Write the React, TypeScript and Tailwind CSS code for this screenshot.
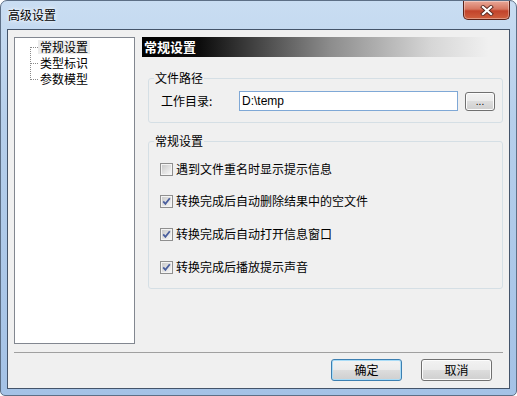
import React from "react";

function TreeConnector({ kind }: { kind: "first" | "mid" | "last" }) {
  const y1 = kind === "first" ? 8 : 0;
  const y2 = kind === "last" ? 9 : 16;
  return (
    <svg width="8" height="16" viewBox="0 0 8 16" shapeRendering="crispEdges" className="shrink-0">
      <line x1="0.5" y1={y1} x2="0.5" y2={y2} stroke="#8a8a8a" strokeWidth="1" strokeDasharray="1 1" />
      <line x1="1" y1="8.5" x2="8" y2="8.5" stroke="#8a8a8a" strokeWidth="1" strokeDasharray="1 1" />
    </svg>
  );
}

function CheckBox({ checked }: { checked: boolean }) {
  return (
    <svg width="13" height="13" viewBox="0 0 13 13" className="shrink-0">
      <defs>
        <linearGradient id={checked ? "cbg1" : "cbg0"} x1="0" y1="0" x2="1" y2="1">
          <stop offset="0" stopColor="#cbcbcb" />
          <stop offset="1" stopColor="#f6f6f6" />
        </linearGradient>
      </defs>
      <rect x="0.5" y="0.5" width="12" height="12" fill="#f4f4f4" stroke="#8f8f8f" />
      <rect x="2" y="2" width="9" height="9" fill={`url(#${checked ? "cbg1" : "cbg0"})`} />
      {checked && (
        <path d="M3.2 6.4 L5.4 8.8 L9.8 3.2" fill="none" stroke="#4a5f9e" strokeWidth="1.8" />
      )}
    </svg>
  );
}

function WinButton({ label, isDefault }: { label: string; isDefault?: boolean }) {
  return (
    <div
      className={
        "w-[71px] h-[22px] rounded-[3px] border flex items-center justify-center text-[12px] text-black bg-[linear-gradient(180deg,#f2f2f2_0%,#ebebeb_50%,#dddddd_50%,#cfcfcf_100%)] " +
        (isDefault
          ? "border-[#3c7fb1] shadow-[inset_0_0_0_1px_#a9dcf7]"
          : "border-[#707070] shadow-[inset_0_0_0_1px_#fcfcfc]")
      }
    >
      {label}
    </div>
  );
}

export default function App() {
  const checks = [
    { label: "遇到文件重名时显示提示信息", checked: false, mt: "" },
    { label: "转换完成后自动删除结果中的空文件", checked: true, mt: "mt-[16px]" },
    { label: "转换完成后自动打开信息窗口", checked: true, mt: "mt-[17px]" },
    { label: "转换完成后播放提示声音", checked: true, mt: "mt-[17px]" },
  ];
  return (
    <div className='relative w-[517px] h-[396px] overflow-hidden rounded-t-[7px] rounded-b-[5px] border border-[#5d6f86] bg-[linear-gradient(180deg,#c9ddf2_0%,#b6cfeb_30%,#a4c2e6_100%)] flex flex-col font-["Noto_Sans_CJK_SC",sans-serif] text-black'>
      {/* title bar */}
      <div className="h-[28px] flex items-center pl-[7px] text-[12px] leading-[16px]">
        <span className="[text-shadow:0_0_6px_#ffffff,0_0_3px_#ffffff]">高级设置</span>
      </div>
      <div className="absolute top-0 right-[6px] w-[47px] h-[19px] rounded-b-[5px] border border-t-0 border-[#5a2219] bg-[linear-gradient(180deg,#e9a898_0%,#d67660_45%,#c2432b_55%,#d0603f_100%)] flex items-center justify-center shadow-[inset_0_0_0_1px_rgba(255,255,255,0.35)]">
        <svg width="14" height="11" viewBox="0 0 14 11">
          <path d="M3 2 L11 9 M11 2 L3 9" stroke="#5a2a22" strokeWidth="4" strokeLinecap="square" />
          <path d="M3 2 L11 9 M11 2 L3 9" stroke="#ffffff" strokeWidth="2.2" strokeLinecap="square" />
        </svg>
      </div>

      {/* client area */}
      <div className="mx-[6px] h-[360px] border border-[#44546a] bg-[#f0f0f0] px-[6px] pt-[7px] flex flex-col text-[12px] leading-[16px]">
        <div className="flex gap-[7px] h-[307px]">
          {/* tree */}
          <div className="w-[121px] h-full border border-[#828790] bg-white pt-[1px]">
            {[
              { t: "常规设置", k: "first" as const, sel: true },
              { t: "类型标识", k: "mid" as const, sel: false },
              { t: "参数模型", k: "last" as const, sel: false },
            ].map((it) => (
              <div key={it.t} className="h-[16px] flex items-center pl-[15px]">
                <TreeConnector kind={it.k} />
                <span className={"px-[2px] h-[14px] leading-[14px] " + (it.sel ? "bg-[#ececec]" : "")}>{it.t}</span>
              </div>
            ))}
          </div>

          {/* right panel */}
          <div className="w-[361px] flex flex-col">
            <div className="h-[20px] pl-[2px] flex items-center bg-[linear-gradient(90deg,#000000_0%,#0c0c0c_16%,#8c8c8c_52%,#d6d6d6_80%,#f0f0f0_96%)] text-white font-bold text-[13px]">
              常规设置
            </div>

            <fieldset className="mt-[13px] ml-[6px] w-[355px] border border-[#d5dfe5] rounded-[3px] pl-[5px] pr-[7px] pb-[11px]">
              <legend className="px-[1px] leading-[16px]">文件路径</legend>
              <div className="pl-[7px] pt-[5px] flex items-center">
                <div className="w-[78px]">工作目录:</div>
                <div className='w-[219px] h-[20px] border border-[#7fa8d6] bg-white flex items-center pl-[2px] font-["Liberation_Sans",sans-serif] text-[12px]'>
                  D:\temp
                </div>
                <div className='ml-[7px] w-[30px] h-[19px] rounded-[3px] border border-[#707070] bg-[linear-gradient(180deg,#f2f2f2_0%,#ebebeb_50%,#dddddd_50%,#cfcfcf_100%)] shadow-[inset_0_0_0_1px_#fcfcfc] flex items-end justify-center pb-[3px] text-[10px] leading-[10px] font-["Liberation_Sans",sans-serif]'>
                  ...
                </div>
              </div>
            </fieldset>

            <fieldset className="mt-[10px] ml-[6px] w-[355px] border border-[#d5dfe5] rounded-[3px] pl-[5px] pr-[7px] pb-[13px]">
              <legend className="px-[1px] leading-[16px]">常规设置</legend>
              <div className="pl-[6px] pt-[12px] flex flex-col">
                {checks.map((c) => (
                  <div key={c.label} className={"h-[16px] flex items-center " + c.mt}>
                    <CheckBox checked={c.checked} />
                    <span className="ml-[3px]">{c.label}</span>
                  </div>
                ))}
              </div>
            </fieldset>
          </div>
        </div>

        <div className="mt-[8px] h-px bg-[#a0a0a0]" />

        <div className="mt-[6px] flex justify-end gap-[19px] pr-[11px]">
          <WinButton label="确定" isDefault />
          <WinButton label="取消" />
        </div>
      </div>
    </div>
  );
}
